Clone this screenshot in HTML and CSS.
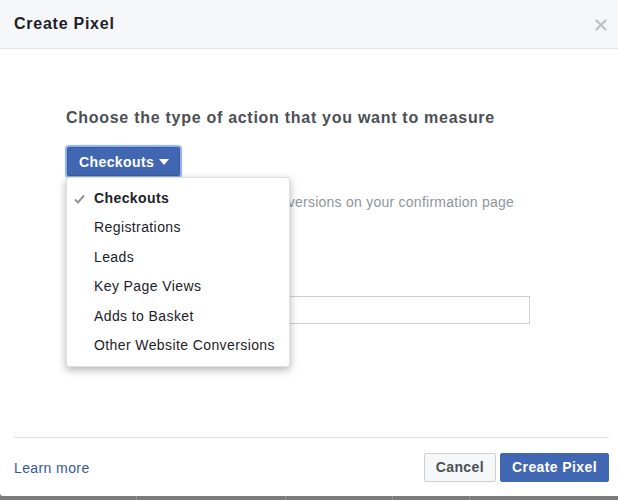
FILE: index.html
```html
<!DOCTYPE html>
<html>
<head>
<meta charset="utf-8">
<link rel="stylesheet" href="styles.css">
</head>
<body>
<div class="dialog">
  <div class="header">
    <div class="title">Create Pixel</div>
    <svg class="close" width="12" height="12" viewBox="0 0 12 12"><path d="M1.5 1.5 L10.5 10.5 M10.5 1.5 L1.5 10.5" stroke="#bec2c9" stroke-width="2.4" stroke-linecap="round"/></svg>
  </div>
  <div class="content">
    <div class="heading">Choose the type of action that you want to measure</div>
    <div class="select-wrap">
      <div class="select-btn">Checkouts<span class="caret"></span></div>
      <div class="menu">
        <div class="item selected"><svg class="check" width="11" height="10" viewBox="0 0 11 10"><path d="M1 5.5 L4 8.5 L10 1.5" fill="none" stroke="#90949c" stroke-width="2"/></svg>Checkouts</div>
        <div class="item">Registrations</div>
        <div class="item">Leads</div>
        <div class="item">Key Page Views</div>
        <div class="item">Adds to Basket</div>
        <div class="item">Other Website Conversions</div>
      </div>
    </div>
    <div class="desc">Track purchases and other conversions on your confirmation page</div>
    <div class="label">Pixel name</div>
    <div class="input"></div>
  </div>
  <div class="footer">
    <a class="learn">Learn more</a>
    <div class="actions">
      <div class="btn cancel">Cancel</div>
      <div class="btn primary">Create Pixel</div>
    </div>
  </div>
</div>
<div class="backdrop">
  <div class="cell c1"></div><div class="cell c2"></div><div class="cell c3"></div><div class="cell c4"></div><div class="cell c5"></div>
</div>
</body>
</html>
```
FILE: styles.css
```css
html, body {
  margin: 0;
  padding: 0;
  width: 618px;
  height: 500px;
  overflow: hidden;
  font-family: "Liberation Sans", Arial, sans-serif;
  background: #7b7b7b;
  letter-spacing: 0.4px;
}
.dialog {
  height: 496px;
  background: #fff;
  display: flex;
  flex-direction: column;
  border-bottom-left-radius: 3px;
}
.header {
  height: 48px;
  background: #f6f7f9;
  border-bottom: 1px solid #e5e5e5;
  display: flex;
  align-items: center;
  justify-content: space-between;
  padding: 0 11px 0 14px;
  flex: none;
}
.title {
  font-weight: bold;
  font-size: 16px;
  color: #1d2129;
  margin-top: -1px;
  letter-spacing: 0.75px;
}
.close {
  display: block;
  margin-top: 1px;
}
.content {
  flex: 1;
  padding: 59px 0 0 66px;
  position: relative;
}
.heading {
  font-weight: bold;
  font-size: 16px;
  line-height: 19px;
  color: #4b4f56;
  letter-spacing: 0.72px;
}
.select-wrap {
  position: relative;
  margin-top: 20px;
  height: 29px;
}
.select-btn {
  display: inline-flex;
  align-items: center;
  box-sizing: border-box;
  height: 29px;
  margin-left: 1px;
  padding: 0 10px 0 11px;
  background: #4267b2;
  border: 1px solid #3b5ca0;
  border-radius: 2px;
  box-shadow: 0 0 1px 2px #8fb0f0;
  color: #fff;
  font-weight: bold;
  font-size: 14px;
}
.caret {
  width: 0;
  height: 0;
  border-left: 5.5px solid transparent;
  border-right: 5.5px solid transparent;
  border-top: 6px solid #fff;
  margin-left: 5px;
  margin-top: 1px;
}
.menu {
  position: absolute;
  left: 0;
  top: 30px;
  width: 224px;
  box-sizing: border-box;
  padding: 6px 0;
  background: #fff;
  border: 1px solid rgba(0,0,0,0.12);
  border-radius: 3px;
  box-shadow: 0 3px 8px rgba(0,0,0,0.3);
  z-index: 2;
}
.item {
  height: 29.4px;
  line-height: 29.4px;
  padding-left: 27px;
  font-size: 14px;
  color: #1d2129;
  position: relative;
}
.item.selected {
  font-weight: bold;
}
.check {
  position: absolute;
  left: 7px;
  top: 10px;
}
.desc {
  margin-top: 18px;
  margin-left: 22px;
  font-size: 14px;
  line-height: 17px;
  color: #90949c;
  white-space: nowrap;
  letter-spacing: 0.25px;
}
.label {
  margin-top: 63px;
  font-size: 12px;
  font-weight: bold;
  color: #4b4f56;
}
.input {
  margin-top: 8px;
  width: 464px;
  height: 28px;
  box-sizing: border-box;
  border: 1px solid #ccd0d5;
}
.footer {
  flex: none;
  margin: 0 9px 0 14px;
  border-top: 1px solid #dddfe2;
  padding: 15px 0 14px;
  display: flex;
  align-items: center;
  justify-content: space-between;
}
.learn {
  font-size: 14px;
  color: #365899;
}
.actions {
  display: flex;
  gap: 4px;
}
.btn {
  box-sizing: border-box;
  height: 29px;
  line-height: 27px;
  padding: 0 11px;
  border-radius: 2px;
  font-weight: bold;
  font-size: 14px;
}
.cancel {
  background: #f6f7f9;
  border: 1px solid #ced0d4;
  color: #4b4f56;
}
.primary {
  background: #4267b2;
  border: 1px solid #4267b2;
  color: #fff;
}
.backdrop {
  height: 4px;
  display: flex;
}
.cell {
  border-right: 1px solid #939393;
}
.c1 { width: 136px; }
.c2 { width: 148px; }
.c3 { width: 106px; }
.c4 { width: 76px; }
.c5 { flex: 1; border-right: none; }
```
